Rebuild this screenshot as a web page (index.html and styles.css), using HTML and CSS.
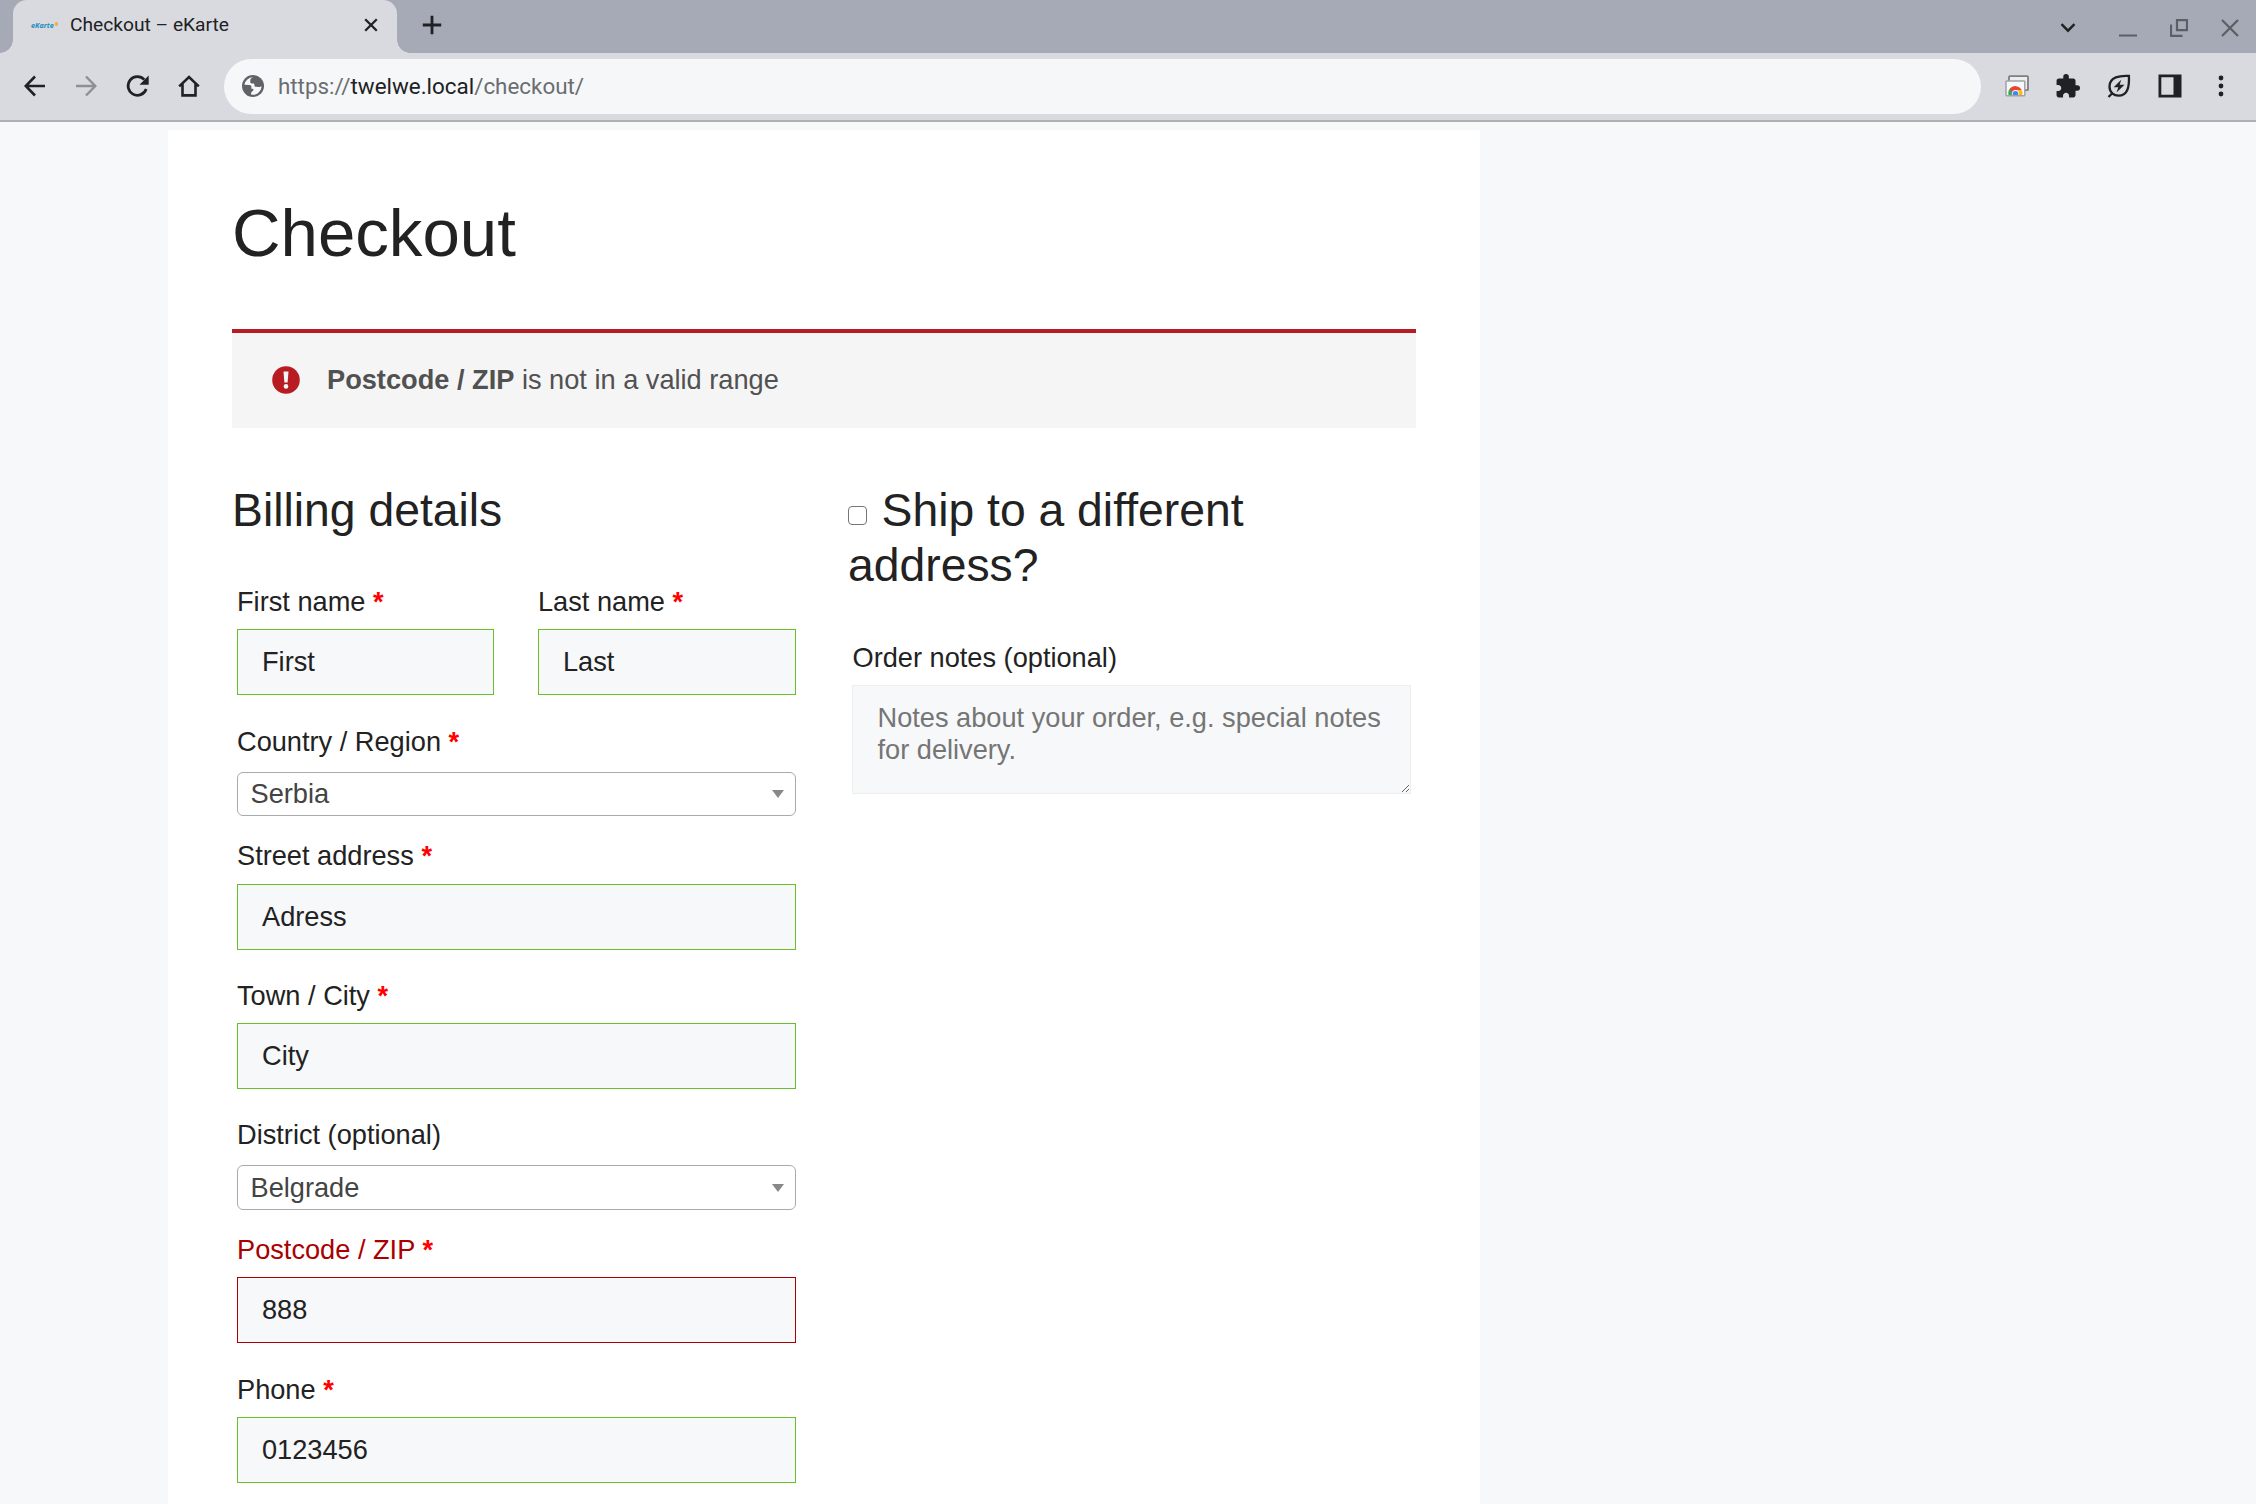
FILE: index.html
```html
<!DOCTYPE html>
<html lang="en">
<head>
<meta charset="utf-8">
<title>Checkout – eKarte</title>
<link rel="stylesheet" href="styles.css">
</head>
<body>
<header class="browser">
  <div class="tabstrip">
    <div class="tab">
      <span class="favicon">eKarte<i class="favicon-mark"></i></span>
      <span class="tab-title">Checkout – eKarte</span>
      <svg class="tab-close" width="14" height="14" viewBox="0 0 14 14"><path d="M1.2 1.2l11.6 11.6M12.8 1.2L1.2 12.8" stroke="#202124" stroke-width="2.3"/></svg>
    </div>
    <svg class="new-tab" width="20" height="20" viewBox="0 0 20 20"><path d="M10 .8v18.4M.8 10h18.4" stroke="#202124" stroke-width="2.8"/></svg>
    <div class="window-controls">
      <svg width="16" height="10" viewBox="0 0 16 10"><path d="M1.5 1.2L8 7.7l6.500-6.500" fill="none" stroke="#202124" stroke-width="2.400"/></svg>
      <svg width="18" height="18" viewBox="0 0 18 18"><path d="M0 16.500h18" stroke="#5c5f63" stroke-width="2"/></svg>
      <svg width="18" height="18" viewBox="0 0 18 18"><path d="M7 1.200h10v10H7zM1 5.500v11.300h11.500" fill="none" stroke="#5c5f63" stroke-width="2.200"/></svg>
      <svg width="18" height="18" viewBox="0 0 18 18"><path d="M1 1l16 16M17 1L1 17" stroke="#5c5f63" stroke-width="2.300"/></svg>
    </div>
  </div>
  <div class="toolbar">
    <div class="nav">
      <svg width="22" height="22" viewBox="0 0 22 22"><path d="M21 11H2M11 1.500L1.700 11l9.300 9.500" fill="none" stroke="#202124" stroke-width="2.600"/></svg>
      <svg width="22" height="22" viewBox="0 0 22 22"><path d="M1 11h19M11 1.500l9.300 9.500-9.300 9.500" fill="none" stroke="#8d8f94" stroke-width="2.400"/></svg>
      <svg width="22" height="22" viewBox="-.7 0 22 22" overflow="visible"><path d="M19.500 14A9.300 9.300 0 1 1 17.600 4.700" fill="none" stroke="#202124" stroke-width="2.700"/><path d="M22 .5v9.200h-9.200z" fill="#202124"/></svg>
      <svg width="22" height="22" viewBox="0 0 22 22"><path d="M1.200 11.400L11 2l9.800 9.400M4.500 9v11.400h13V9" fill="none" stroke="#202124" stroke-width="2.600"/></svg>
    </div>
    <div class="omnibox">
      <svg width="22" height="22" viewBox="2 2 20 20"><circle cx="12" cy="12" r="10" fill="#5f6368"/><path fill="#f6f7f9" d="M11.500 4.100c-.9.700-2.300 1.300-2.300 2.700v1.700c0 .8.700 1.300 1.500 1.300h1.600c.9 0 1 .9 1 1.700 0 .7.700 1.100 1.500 1.100h2.700c.9 0 1.300-.6 2.400-.6A8 8 0 0 1 10.800 19.900v-2.100l1.500-1.600c.6-.7.400-1.700-.5-1.700H10.600V13c0-1-.8-1.600-1.800-1.600H4.100A8 8 0 0 1 11.500 4.100z" transform="rotate(4 12 12)"/></svg>
      <span class="url">https://<b>twelwe.local</b>/checkout/</span>
    </div>
    <div class="actions">
      <svg width="24" height="22" viewBox="0 0 24 22"><rect x="4" y="1.200" width="19" height="14" rx=".8" fill="#eceeee" stroke="#7d7f82" stroke-width="1.800"/><rect x="1" y="6" width="18.800" height="14.800" rx=".8" fill="#f7f8fa" stroke="#a0a2a5" stroke-width="1.500"/><path d="M3.600 20a7 7 0 0 1 1.600-6.800L9 20z" fill="#34a853"/><path d="M4.800 13.700a7 7 0 0 1 11.900 1.600h-6.200L7.500 18z" fill="#ea4335"/><path d="M10.500 15.300h6.300a7 7 0 0 1 .4 4.700H12z" fill="#fbbc04"/><path d="M6.900 20v-1.500a3.600 3.600 0 0 1 7.200 0V20z" fill="#f7f8fa"/><path d="M7.700 20v-1.300a2.800 2.800 0 0 1 5.600 0V20z" fill="#4285f4"/></svg>
      <svg width="24" height="24" viewBox="1.500 1 21.500 21.500"><path fill="#202124" d="M20.500 11H19V7c0-1.100-.9-2-2-2h-4V3.500a2.500 2.500 0 0 0-5 0V5H4c-1.100 0-1.990.9-1.990 2v3.800H3.500c1.490 0 2.700 1.210 2.700 2.700s-1.210 2.700-2.700 2.700H2V20c0 1.100.9 2 2 2h3.800v-1.500c0-1.490 1.210-2.700 2.700-2.700s2.700 1.210 2.700 2.700V22H17c1.100 0 2-.9 2-2v-4h1.500a2.500 2.500 0 0 0 0-5z"/></svg>
      <svg width="24" height="24" viewBox="0 0 24 24"><path d="M21.900 1.900C13 1.300 2.500 3 2.500 12.500c0 6 4.500 9.200 9 9.200C20.500 21.700 22.500 13 21.900 1.900zM1.500 23l4.300-4.300" fill="none" stroke="#202124" stroke-width="2.300"/><path d="M14.200 5.800l-7.500 7.400h4.600l-1.800 5.300 8-7.700h-4.800z" fill="#202124"/></svg>
      <svg width="24" height="24" viewBox="0 0 24 24"><path fill="#202124" d="M.5.500h23v23H.5zM3.300 3.300v17.400h12.200V3.300z" fill-rule="evenodd"/></svg>
      <svg width="6" height="22" viewBox="0 0 6 22"><g fill="#202124"><circle cx="3" cy="3" r="2.400"/><circle cx="3" cy="11" r="2.400"/><circle cx="3" cy="19" r="2.400"/></g></svg>
    </div>
  </div>
</header>
<main class="page">
  <h1>Checkout</h1>
  <div class="notice">
    <svg width="28" height="28" viewBox="0 0 28 28"><circle cx="14" cy="14" r="13.800" fill="#b81c23"/><path d="M11.500 5.500h5l-.9 11h-3.200z" fill="#f5f5f5"/><circle cx="14" cy="20.400" r="2.300" fill="#f5f5f5"/></svg>
    <p><strong>Postcode / ZIP</strong> is not in a valid range</p>
  </div>
  <form class="columns">
    <section class="billing">
      <h3>Billing details</h3>
      <div class="fields">
        <div class="pair">
          <div class="field"><label for="first">First name <abbr>*</abbr></label><input id="first" value="First"></div>
          <div class="field"><label for="last">Last name <abbr>*</abbr></label><input id="last" value="Last"></div>
        </div>
        <div class="field country"><label>Country / Region <abbr>*</abbr></label><div class="select">Serbia</div></div>
        <div class="field street"><label for="street">Street address <abbr>*</abbr></label><input id="street" value="Adress"></div>
        <div class="field town"><label for="city">Town / City <abbr>*</abbr></label><input id="city" value="City"></div>
        <div class="field district"><label>District (optional)</label><div class="select">Belgrade</div></div>
        <div class="field postcode invalid"><label for="zip">Postcode / ZIP <abbr>*</abbr></label><input id="zip" value="888"></div>
        <div class="field phone"><label for="phone">Phone <abbr>*</abbr></label><input id="phone" value="0123456"></div>
      </div>
    </section>
    <section class="shipping">
      <h3><input type="checkbox" class="check" id="ship"><label for="ship">Ship to a different address?</label></h3>
      <div class="field notes"><label for="notes">Order notes (optional)</label><textarea id="notes" placeholder="Notes about your order, e.g. special notes for delivery."></textarea></div>
    </section>
  </form>
</main>
</body>
</html>
```
FILE: styles.css
```css
* { box-sizing: border-box; }
body {
  margin: 0;
  height: 1504px;
  overflow: hidden;
  background: #f7f8fa;
  color: #222;
  font: 27.2px "Liberation Sans", Arial, sans-serif;
}
svg { display: block; flex: none; }

/* Browser frame */
.browser {
  height: 122px;
  border-bottom: 2px solid #aeafb1;
  background: #d9dadf;
  font-family: Roboto, sans-serif;
  color: #202124;
}
.tabstrip {
  display: flex;
  align-items: center;
  height: 53px;
  padding-left: 13px;
  background: #a6aab6;
}
.tab {
  position: relative;
  display: flex;
  align-items: center;
  width: 384px;
  height: 53px;
  padding: 0 19px 3px 18px;
  border-radius: 14px 14px 0 0;
  background: #d9dadf;
}
.tab::before,
.tab::after {
  content: "";
  position: absolute;
  bottom: 0;
  width: 13px;
  height: 13px;
}
.tab::before { left: -13px; background: radial-gradient(circle at 0 0, transparent 12.5px, #d9dadf 13px); }
.tab::after { right: -13px; background: radial-gradient(circle at 100% 0, transparent 12.5px, #d9dadf 13px); }
.favicon {
  display: flex;
  width: 39px;
  font: italic bold 7.2px "Open Sans", sans-serif;
  color: #1c8dc0;
}
.favicon-mark {
  width: 3px;
  height: 4px;
  margin: 2px 0 0 1px;
  border-radius: 1px;
  background: #efb04a;
}
.tab-title { flex: 1; font-size: 19.2px; line-height: 26px; }
.new-tab { margin: 0 0 3px 25px; }
.window-controls {
  display: flex;
  align-items: center;
  gap: 33px;
  margin: 2px 17px 0 auto;
}
.window-controls svg:first-child { margin-right: 10px; }
.toolbar {
  display: flex;
  align-items: center;
  height: 67px;
  padding: 0 32px 1px 24px;
}
.nav { display: flex; gap: 29.2px; margin-right: 24.4px; }
.omnibox {
  display: flex;
  align-items: center;
  flex: 1;
  height: 55px;
  padding-left: 18px;
  border-radius: 28px;
  background: #f6f7f9;
}
.url { margin-left: 14px; font-size: 22.4px; color: #6a6d71; }
.url b { font-weight: 400; color: #202124; }
.actions { display: flex; align-items: center; gap: 27px; margin-left: 24px; }
.actions svg:last-child { margin-left: 9px; }

/* Checkout page */
.page {
  width: 1312px;
  height: 1374px;
  margin: 8px 0 0 168px;
  padding: 63px 64px 0;
  background: #fff;
}
h1 { margin: 0; font-size: 67.200px; font-weight: 400; line-height: 80px; }
.notice {
  display: flex;
  align-items: center;
  gap: 27px;
  height: 99px;
  margin-top: 56px;
  padding: 0 40px 1px;
  border-top: 4px solid #b81c23;
  background: #f5f5f5;
  color: #515151;
}
.notice p { margin: 0; }
.columns { display: flex; gap: 48px; margin-top: 55px; }
.billing { width: 568px; }
.shipping { width: 568px; }
h3 { margin: 0; font-size: 46.300px; font-weight: 400; line-height: 55px; }
.billing .fields { padding: 37px 4px 0 5px; }
.pair { display: grid; grid-template-columns: 257px 258px; justify-content: space-between; }
.field label { display: block; line-height: 54px; }
.field abbr { font-weight: 700; color: red; }
.field > input {
  display: block;
  width: 100%;
  height: 66px;
  padding: 0 24px;
  border: 1px solid #69bf29;
  border-radius: 0;
  background: #f7f8fa;
  color: #222;
  font: inherit;
  outline: 0;
}
.country { margin-top: 20px; }
.street { margin-top: 13px; }
.street label { padding-bottom: 1px; }
.town, .district { margin-top: 19px; }
.postcode { margin-top: 13px; }
.phone { margin-top: 20px; }
.invalid label { color: #a00; }
.invalid > input { border-color: #a00; }
.select {
  display: flex;
  align-items: center;
  justify-content: space-between;
  height: 44px;
  margin-top: 3px;
  padding: 0 11px 0 12.5px;
  border: 1px solid #aaa;
  border-radius: 6px;
  color: #444;
}
.district .select { height: 45px; }
.select::after {
  content: "";
  border: 6px solid transparent;
  border-top: 8px solid #888;
  border-bottom: 0;
}
.check {
  appearance: none;
  width: 19px;
  height: 19px;
  margin: 0 14.5px 0 0;
  vertical-align: 1.5px;
  border: 1.500px solid #767676;
  border-radius: 4px;
  background: #fff;
}
.notes { padding: 38px 5px 0 4px; }
.notes label { padding-left: .5px; }
textarea {
  display: block;
  width: 100%;
  height: 109px;
  padding: 16px 23px 16px 24.5px;
  border: 1px solid #eee;
  background: #f7f8fa;
  font: inherit;
  line-height: 32px;
  resize: vertical;
  outline: 0;
  overflow: hidden;
}
textarea::placeholder { color: #757575; }
```
